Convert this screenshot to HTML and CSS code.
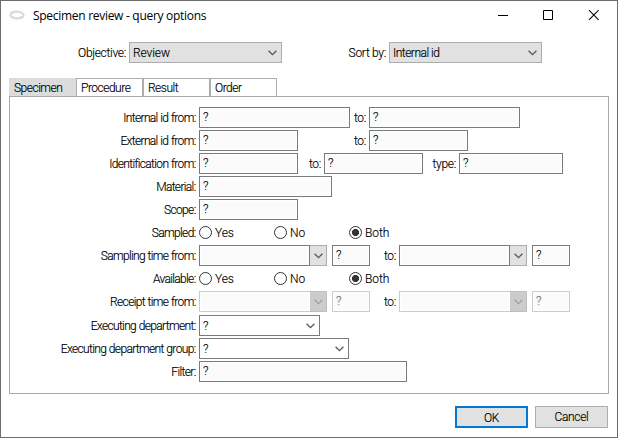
FILE: index.html
```
<!DOCTYPE html>
<html lang="en">
<head>
<meta charset="utf-8">
<title>Specimen review - query options</title>
<link rel="stylesheet" href="styles.css">
</head>
<body>
<svg width="0" height="0" class="defs"><defs>
<symbol id="chev" viewBox="0 0 9 6"><path d="M.6.8 4.5 4.6 8.4.8" fill="none" stroke="currentColor" stroke-width="1.3"/></symbol>
</defs></svg>
<div class="window">
  <header class="titlebar">
    <svg class="logo" width="16" height="10" viewBox="0 0 16 10"><ellipse cx="8" cy="5" rx="6.6" ry="3.2" fill="none" stroke="#d0dbe0" stroke-width="2"/><path d="M1 2.6C4 .3 11 .4 14 3M2 7.600C5 10 12 9.600 15 7" fill="none" stroke="#dde4e7"/></svg>
    <h1>Specimen review - query options</h1>
    <svg class="controls" width="102" height="12" viewBox="0 0 102 12"><path d="M0 5.500H10M45.500 .500H54.500V9.500H45.500Z" fill="none" stroke="#000"/><path d="M91 .200 100.600 9.800M100.600 .200 91 9.800" stroke="#000" stroke-width="1.100"/></svg>
  </header>
  <div class="top">
    <span class="lbl objective">Objective:</span><div class="select"><span class="loose">Review</span><svg><use href="#chev"/></svg></div>
    <span class="lbl sort">Sort by:</span><div class="select"><span>Internal id</span><svg><use href="#chev"/></svg></div>
  </div>
  <nav class="tabs"><span class="tab active">Specimen</span><span class="tab">Procedure</span><span class="tab">Result</span><span class="tab">Order</span></nav>
  <main class="panel">
    <div class="row"><span class="lbl main">Internal id from:</span><div class="field w151">?</div><span class="lbl g19">to:</span><div class="field w151">?</div></div>
    <div class="row"><span class="lbl main">External id from:</span><div class="field w99">?</div><span class="lbl g71">to:</span><div class="field w99">?</div></div>
    <div class="row"><span class="lbl main">Identification from:</span><div class="field w99">?</div><span class="lbl g26">to:</span><div class="field w99">?</div><span class="lbl g36">type:</span><div class="field w104">?</div></div>
    <div class="row"><span class="lbl main">Material:</span><div class="field w133">?</div></div>
    <div class="row"><span class="lbl main">Scope:</span><div class="field w99">?</div></div>
    <div class="row"><span class="lbl main">Sampled:</span><span class="radio"><i></i>Yes</span><span class="radio"><i></i>No</span><span class="radio on"><i></i>Both</span></div>
    <div class="row"><span class="lbl main">Sampling time from:</span><div class="combo"><b></b><span><svg><use href="#chev"/></svg></span></div><div class="field w38">?</div><span class="lbl g29">to:</span><div class="combo"><b></b><span><svg><use href="#chev"/></svg></span></div><div class="field w38">?</div></div>
    <div class="row"><span class="lbl main">Available:</span><span class="radio"><i></i>Yes</span><span class="radio"><i></i>No</span><span class="radio on"><i></i>Both</span></div>
    <div class="row off"><span class="lbl main">Receipt time from:</span><div class="combo"><b></b><span><svg><use href="#chev"/></svg></span></div><div class="field w38">?</div><span class="lbl g29">to:</span><div class="combo"><b></b><span><svg><use href="#chev"/></svg></span></div><div class="field w38">?</div></div>
    <div class="row"><span class="lbl main">Executing department:</span><div class="field drop w121">?<svg><use href="#chev"/></svg></div></div>
    <div class="row"><span class="lbl main">Executing department group:</span><div class="field drop w150">?<svg><use href="#chev"/></svg></div></div>
    <div class="row"><span class="lbl main">Filter:</span><div class="field w208">?</div></div>
  </main>
  <footer><button class="default">OK</button><button>Cancel</button></footer>
</div>
</body>
</html>
```
FILE: styles.css
```
* { box-sizing: border-box; }
body { margin: 0; background: #fff; color: #000; font: 300 12px/20px Roboto, "Liberation Sans", sans-serif; letter-spacing: -.5px; -webkit-text-stroke: .15px; }
.defs { position: absolute; }
.window { width: 618px; height: 438px; border: 1px solid #6c6c6c; display: flex; flex-direction: column; }
.titlebar { height: 30px; display: flex; align-items: center; padding-left: 8px; flex: none; }
.titlebar h1 { margin: 0 auto 0 8px; font: 12px/20px "Open Sans", "Noto Sans", sans-serif; letter-spacing: -.29px; -webkit-text-stroke: 0; }
.logo { margin-bottom: 2px; }
.controls { margin-right: 17px; }
.top { display: flex; height: 21px; margin-top: 11px; flex: none; }
.lbl { text-align: right; padding-right: 3px; flex: none; white-space: nowrap; line-height: 22px; letter-spacing: -.3px; }
.objective { width: 128px; }
.sort { width: 107px; }
.select { width: 153px; height: 21px; border: 1px solid #adadad; background: #e1e1e1; padding: 0 4px 0 3px; display: flex; justify-content: space-between; align-items: center; }
.loose { letter-spacing: -.1px; }
svg:has(use) { width: 9px; height: 6px; color: #555; flex: none; display: block; }
.tabs { display: flex; margin: 15px 0 0 8px; height: 18px; flex: none; }
.tab { width: 67px; border: 1px solid #adadad; border-bottom: 0; padding-left: 4px; line-height: 18px; }
.tab.active { background: #dcdcdc; border-color: #dcdcdc; }
.panel { width: 600px; height: 298px; margin-left: 8px; border: 1px solid #a9a9a9; padding-top: 10px; flex: none; }
.row { display: flex; height: 21px; margin-bottom: 2px; }
.row.off + .row { margin-top: 3px; }
.main { width: 189px; padding-right: 3.500px; letter-spacing: -.66px; word-spacing: .4px; }
.field { height: 21px; border: 1px solid #7a7a7a; background: #fbfbfb; box-shadow: inset 0 0 0 1px #fff; padding-left: 3px; line-height: 18px; flex: none; }
.drop { background: #fff; display: flex; justify-content: space-between; align-items: center; padding-right: 4px; }
.w38 { width: 38px; margin-left: 5px; }
.w99 { width: 99px; }
.w104 { width: 104px; }
.w121 { width: 121px; }
.w133 { width: 133px; }
.w150 { width: 150px; }
.w151 { width: 151px; }
.w208 { width: 208px; }
.g19 { width: 19px; }
.g26 { width: 26px; }
.g29 { width: 29px; }
.g36 { width: 36px; }
.g71 { width: 71px; }
.combo { display: flex; width: 128px; height: 21px; flex: none; }
.combo b { width: 111px; border: 1px solid #7a7a7a; background: #fbfbfb; box-shadow: inset 0 0 0 1px #fff; }
.combo span { width: 17px; border: 1px solid #adadad; border-left: 0; background: #e1e1e1; display: flex; align-items: center; justify-content: center; }
.off .combo b, .off .field { border-color: #ccc; color: #6d6d6d; }
.off .combo b { border-right: 0; }
.off .combo span { background: #ccc; border-color: #bfbfbf; }
.off svg { color: #a0a0a0; }
.radio { width: 75px; display: flex; align-items: center; gap: 3px; line-height: 22px; letter-spacing: -.1px; }
.radio i { width: 13px; height: 13px; border: 1px solid #333; border-radius: 50%; background: #fff; flex: none; }
.radio.on i { background: radial-gradient(circle, #333 3.2px, #fff 3.900px); }
footer { display: flex; justify-content: flex-end; gap: 7px; margin: 12px 9px 0 0; }
button { width: 73px; height: 22px; padding: 0; border: 1px solid #adadad; background: #e1e1e1; color: #000; font: inherit; letter-spacing: -.35px; }
button.default { border: 2px solid #0078d7; padding-bottom: 1px; }
```
